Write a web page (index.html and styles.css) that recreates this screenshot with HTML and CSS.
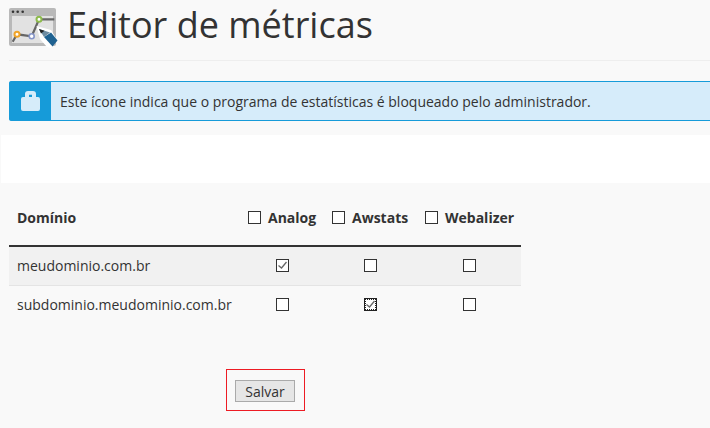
FILE: index.html
```html
<!DOCTYPE html>
<html lang="pt-BR">

<head>
    <meta charset="UTF-8">
    <meta name="viewport" content="width=device-width, initial-scale=1.0">
    <title>Editor de métricas</title>
    <link rel="stylesheet" href="styles.css">
</head>

<body>
    <!-- Page header -->
    <header class="page-header">
        <svg class="page-icon" width="49" height="40" viewBox="0 0 49 40">
            <rect x="0" y="0" width="47" height="38" rx="2" fill="#b9b9b9"/>
            <rect x="3" y="8" width="41" height="27" fill="#e2e2e2"/>
            <circle cx="4" cy="3.700" r="1.300" fill="#333"/>
            <circle cx="8.700" cy="3.700" r="1.300" fill="#333"/>
            <circle cx="13.700" cy="3.700" r="1.300" fill="#333"/>
            <path d="M3.700 33.700 L8 26.300 L22.700 28.300 L30 11.300 H45.300" fill="none" stroke="#666" stroke-width="2.200"/>
            <circle cx="8" cy="26.300" r="2.500" fill="#fff" stroke="#f0a428" stroke-width="2"/>
            <circle cx="22.700" cy="28.300" r="2.500" fill="#fff" stroke="#8796c8" stroke-width="1.600"/>
            <circle cx="30" cy="11.300" r="2.500" fill="#fff" stroke="#8dbb4c" stroke-width="2"/>
            <path d="M27.500 18 L42 22 L47 30 L42 40 L38 39 L31 31 Z" fill="#fff"/>
            <path d="M35 29 L42 24.500 L48.500 32.500 L43.500 38.500 Z" fill="#1f6291"/>
            <path d="M30 21 L41 24.500 L35 29 Z" fill="#6d8ba0"/>
            <path d="M30 21 L35.500 22.700 L32 25.500 Z" fill="#222"/>
        </svg>
        <h1>Editor de métricas</h1>
    </header>
    <hr class="page-rule">

    <!-- Notice -->
    <div class="notice">
        <div class="notice-icon">
            <svg width="19" height="20" viewBox="0 0 19 20">
                <path fill-rule="evenodd" d="M4 6V3Q4 0 7 0H12Q15 0 15 3V6H17Q19 6 19 8V18Q19 20 17 20H2Q0 20 0 18V8Q0 6 2 6ZM8 3.800V6H11V3.800Z" fill="#d6ecfa"/>
            </svg>
        </div>
        <p>Este ícone indica que o programa de estatísticas é bloqueado pelo administrador.</p>
    </div>

    <div class="blank-band"></div>

    <!-- Metrics table -->
    <table class="metrics">
        <thead>
            <tr>
                <th class="col-domain">Domínio</th>
                <th class="col-analog"><label><input type="checkbox">Analog</label></th>
                <th class="col-awstats"><label><input type="checkbox">Awstats</label></th>
                <th class="col-webalizer"><label><input type="checkbox">Webalizer</label></th>
            </tr>
        </thead>
        <tbody>
            <tr class="odd">
                <td>meudominio.com.br</td>
                <td class="check"><input type="checkbox" checked></td>
                <td class="check"><input type="checkbox"></td>
                <td class="check"><input type="checkbox"></td>
            </tr>
            <tr>
                <td>subdominio.meudominio.com.br</td>
                <td class="check"><input type="checkbox"></td>
                <td class="check"><input type="checkbox" class="focused" checked></td>
                <td class="check"><input type="checkbox"></td>
            </tr>
        </tbody>
    </table>

    <div class="save-box">
        <button>Salvar</button>
    </div>
</body>

</html>
```

FILE: styles.css
```css
/* Reset and Global Styles */
* {
    margin: 0;
    padding: 0;
    box-sizing: border-box;
}

body {
    font-family: "Open Sans", sans-serif;
    font-size: 14px;
    color: #333;
    background-color: #f9f9f9;
    overflow: hidden;
}

/* Page header */
.page-header {
    display: flex;
    align-items: flex-start;
    gap: 9px;
    height: 60px;
    padding: 8px 0 0 9px;
}

.page-header h1 {
    font-size: 36px;
    font-weight: 400;
    line-height: 33px;
}

.page-rule {
    height: 1px;
    margin: 0 0 20px 9px;
    border: none;
    background-color: #eee;
}

/* Notice */
.notice {
    display: flex;
    align-items: center;
    height: 40px;
    margin-left: 9px;
    border: 1px solid #169bd9;
    border-right: none;
    border-radius: 3px 0 0 3px;
    background-color: #d6ecfa;
}

.notice-icon {
    display: flex;
    align-items: center;
    justify-content: center;
    width: 42px;
    height: 40px;
    margin-left: -1px;
    border-radius: 3px 0 0 3px;
    background-color: #169bd9;
}

.notice p {
    padding-left: 9px;
    font-size: 14px;
}

.blank-band {
    height: 48px;
    margin: 14px 0 0 1px;
    background-color: #fff;
}

/* Metrics table */
.metrics {
    width: 512px;
    margin-left: 9px;
    border-collapse: collapse;
    table-layout: fixed;
}

.metrics th {
    height: 63px;
    padding-top: 7px;
    border-bottom: 2px solid #333;
    font-weight: 700;
    text-align: left;
    white-space: nowrap;
}

.metrics th label {
    display: flex;
    align-items: center;
    gap: 7px;
}

.metrics td {
    height: 38px;
    padding-left: 8px;
}

.metrics tbody tr.odd td {
    height: 39px;
    border-bottom: 1px solid #e4e4e4;
    background-color: #f1f1f1;
}

.metrics .col-domain {
    width: 239px;
    padding-left: 8px;
}

.metrics .col-analog {
    width: 84px;
}

.metrics .col-awstats {
    width: 93px;
}

.metrics .col-webalizer {
    width: 96px;
}

.metrics td.check {
    padding-left: 0;
}

.metrics tr td:nth-child(2) input {
    margin-left: 28px;
}

.metrics tr td:nth-child(3) input {
    margin-left: 32px;
}

.metrics tr td:nth-child(4) input {
    margin-left: 38px;
}

/* Checkboxes */
input[type="checkbox"] {
    appearance: none;
    display: block;
    flex: none;
    width: 13px;
    height: 13px;
    border: 1px solid #333;
    background-color: #fff;
}

input[type="checkbox"]:checked {
    background: #fff url("data:image/svg+xml,%3Csvg xmlns='http://www.w3.org/2000/svg' width='11' height='11'%3E%3Cpath d='M1.500 5.500L4.500 8L9.500 2' fill='none' stroke='%23666' stroke-width='1.300'/%3E%3C/svg%3E") no-repeat center;
}

input.focused {
    border-color: #222;
    outline: 1px dotted #222;
    outline-offset: -2px;
}

/* Save button */
.save-box {
    display: flex;
    align-items: flex-start;
    width: 79px;
    height: 42px;
    margin: 46px 0 0 226px;
    padding: 10px 0 0 8px;
    border: 1px solid #ed1c24;
}

button {
    width: 60px;
    height: 22px;
    border: 1px solid #aaa;
    background-color: #e6e6e6;
    color: #333;
    font-family: "Open Sans", sans-serif;
    font-size: 14px;
}
```
